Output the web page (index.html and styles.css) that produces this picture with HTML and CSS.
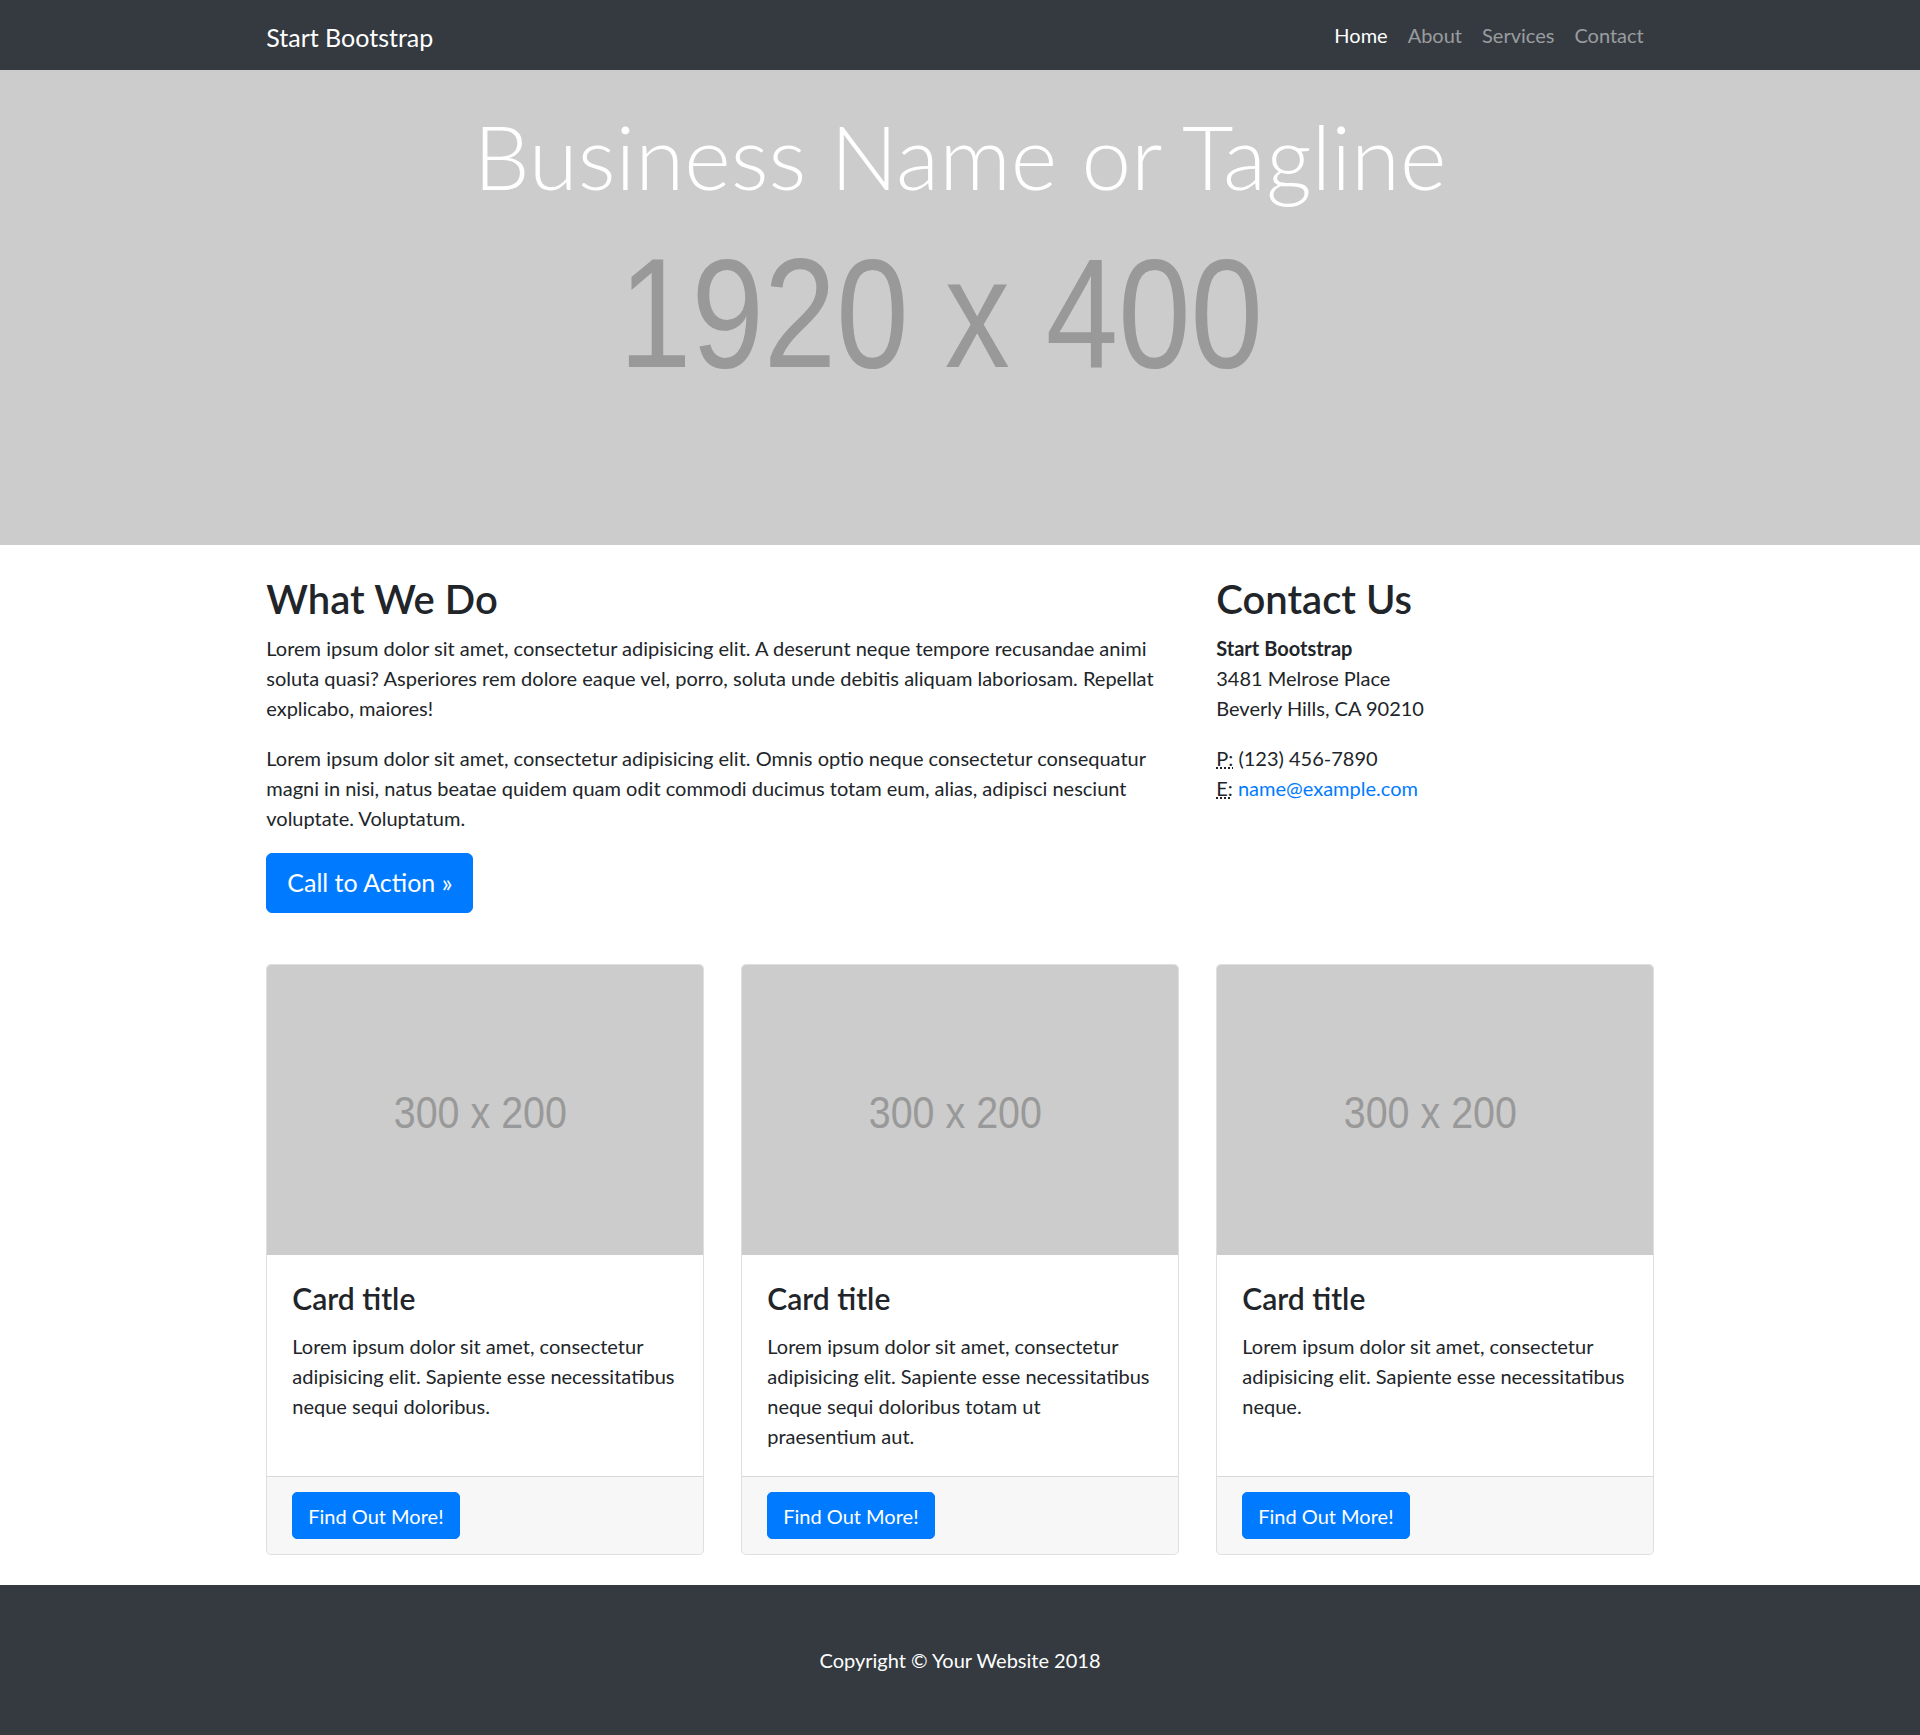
FILE: index.html
```html
<!DOCTYPE html>
<html lang="en">
<head>
<meta charset="utf-8">
<title>Business Frontpage - Start Bootstrap Template</title>
<link rel="stylesheet" href="styles.css">
</head>
<body>
<nav class="navbar">
  <div class="container navbar-inner">
    <a class="brand" href="#">Start Bootstrap</a>
    <ul class="nav">
      <li><a class="nav-link active" href="#">Home</a></li>
      <li><a class="nav-link" href="#">About</a></li>
      <li><a class="nav-link" href="#">Services</a></li>
      <li><a class="nav-link" href="#">Contact</a></li>
    </ul>
  </div>
</nav>

<header class="hero">
  <div class="hero-placeholder" aria-hidden="true">1920 x 400</div>
  <h1 class="hero-title">Business Name or Tagline</h1>
</header>

<main class="container">
  <div class="intro">
    <section class="intro-main">
      <h2 class="heading">What We Do</h2>
      <p>Lorem ipsum dolor sit amet, consectetur adipisicing elit. A deserunt neque tempore recusandae animi soluta quasi? Asperiores rem dolore eaque vel, porro, soluta unde debitis aliquam laboriosam. Repellat explicabo, maiores!</p>
      <p>Lorem ipsum dolor sit amet, consectetur adipisicing elit. Omnis optio neque consectetur consequatur magni in nisi, natus beatae quidem quam odit commodi ducimus totam eum, alias, adipisci nesciunt voluptate. Voluptatum.</p>
      <div class="cta"><a class="btn btn-lg" href="#">Call to Action &raquo;</a></div>
    </section>
    <section class="intro-side">
      <h2 class="heading">Contact Us</h2>
      <address>
        <strong>Start Bootstrap</strong><br>
        3481 Melrose Place<br>
        Beverly Hills, CA 90210
      </address>
      <address>
        <abbr title="Phone">P:</abbr> (123) 456-7890<br>
        <abbr title="Email">E:</abbr> <a class="link" href="#">name@example.com</a>
      </address>
    </section>
  </div>

  <div class="cards">
    <div class="card">
      <div class="card-img"><span class="card-img-text">300 x 200</span></div>
      <div class="card-body">
        <h4 class="card-title">Card title</h4>
        <p class="card-text">Lorem ipsum dolor sit amet, consectetur adipisicing elit. Sapiente esse necessitatibus neque sequi doloribus.</p>
      </div>
      <div class="card-footer"><a class="btn" href="#">Find Out More!</a></div>
    </div>
    <div class="card">
      <div class="card-img"><span class="card-img-text">300 x 200</span></div>
      <div class="card-body">
        <h4 class="card-title">Card title</h4>
        <p class="card-text">Lorem ipsum dolor sit amet, consectetur adipisicing elit. Sapiente esse necessitatibus neque sequi doloribus totam ut praesentium aut.</p>
      </div>
      <div class="card-footer"><a class="btn" href="#">Find Out More!</a></div>
    </div>
    <div class="card">
      <div class="card-img"><span class="card-img-text">300 x 200</span></div>
      <div class="card-body">
        <h4 class="card-title">Card title</h4>
        <p class="card-text">Lorem ipsum dolor sit amet, consectetur adipisicing elit. Sapiente esse necessitatibus neque.</p>
      </div>
      <div class="card-footer"><a class="btn" href="#">Find Out More!</a></div>
    </div>
  </div>
</main>

<footer class="footer">
  <p class="copyright">Copyright &copy; Your Website 2018</p>
</footer>
</body>
</html>
```
FILE: styles.css
```css
*, *::before, *::after { box-sizing: border-box; }

html, body { margin: 0; padding: 0; }

body {
  font-family: Lato, "Open Sans", "Liberation Sans", sans-serif;
  font-size: 20px;
  line-height: 30px;
  color: #212529;
  background: #fff;
}

a { text-decoration: none; }

.container {
  max-width: 1425px;
  margin: 0 auto;
  padding: 0 18.75px;
}

/* Navbar */
.navbar {
  background: #343a40;
  padding: 10px 0;
}
.navbar-inner {
  display: flex;
  align-items: center;
  justify-content: space-between;
}
.brand {
  color: #fff;
  font-size: 25px;
  line-height: 37.5px;
  padding: 8.5px 0 4px;
}
.nav {
  display: flex;
  list-style: none;
  margin: 0;
  padding: 0;
}
.nav-link {
  display: block;
  padding: 10px 10px;
  color: rgba(255, 255, 255, 0.5);
  font-size: 20px;
  line-height: 30px;
}
.nav-link.active { color: #fff; }

/* Hero */
.hero {
  height: 475px;
  background: #ccc;
  display: grid;
  overflow: hidden;
}
.hero-placeholder {
  grid-area: 1 / 1;
  place-self: center;
  font-family: "Liberation Sans", Arial, sans-serif;
  font-size: 156px;
  line-height: 1;
  color: #999;
  white-space: nowrap;
  transform: translate(-19px, 5px) scaleX(0.834);
}
.hero-title {
  grid-area: 1 / 1;
  align-self: start;
  margin: 32px 0 0;
  text-align: center;
  color: #fff;
  font-size: 89px;
  font-weight: 300;
  line-height: 108px;
  position: relative;
}

/* Intro */
.intro {
  display: grid;
  grid-template-columns: 912.5px 437.5px;
  column-gap: 37.5px;
}
.heading {
  margin: 30px 0 10px;
  font-size: 40px;
  line-height: 48px;
  font-weight: 600;
}
.intro p { margin: 0 0 20px; }
.cta {
  display: flex;
  margin-bottom: 21.5px;
}
address {
  font-style: normal;
  margin: 0 0 20px;
}
address strong { font-weight: 700; }
abbr[title] {
  text-decoration: underline dotted;
  cursor: help;
}
.link { color: #007bff; }

/* Buttons */
.btn {
  display: inline-block;
  background: #007bff;
  border: 1px solid #007bff;
  color: #fff;
  font-size: 20px;
  line-height: 30px;
  padding: 7.5px 15px;
  border-radius: 5px;
}
.btn-lg {
  font-size: 25px;
  line-height: 37.5px;
  padding: 10px 20px;
  border-radius: 6px;
}

/* Cards */
.cards {
  display: grid;
  grid-template-columns: repeat(3, 1fr);
  column-gap: 37.5px;
  margin: 30px 0;
}
.card {
  display: flex;
  flex-direction: column;
  border: 1px solid rgba(0, 0, 0, 0.125);
  border-radius: 5px;
  background: #fff;
  overflow: hidden;
}
.card-img {
  height: 290px;
  background: #ccc;
  display: grid;
  place-items: center;
}
.card-img-text {
  font-family: "Liberation Sans", Arial, sans-serif;
  font-size: 45px;
  line-height: 1;
  color: #999;
  white-space: nowrap;
  transform: translate(-4.5px, 1.5px) scaleX(0.876);
}
.card-body {
  flex: 1 1 auto;
  padding: 25px;
}
.card-title {
  margin: 0 0 15px;
  font-size: 30px;
  line-height: 36px;
  font-weight: 600;
}
.card-text { margin: 0; }
.card-footer {
  padding: 15px 25px;
  background: rgba(0, 0, 0, 0.03);
  border-top: 1px solid rgba(0, 0, 0, 0.125);
}

/* Footer */
.footer {
  background: #343a40;
  padding: 60px 0;
}
.copyright {
  margin: 0;
  text-align: center;
  color: #fff;
}
```
